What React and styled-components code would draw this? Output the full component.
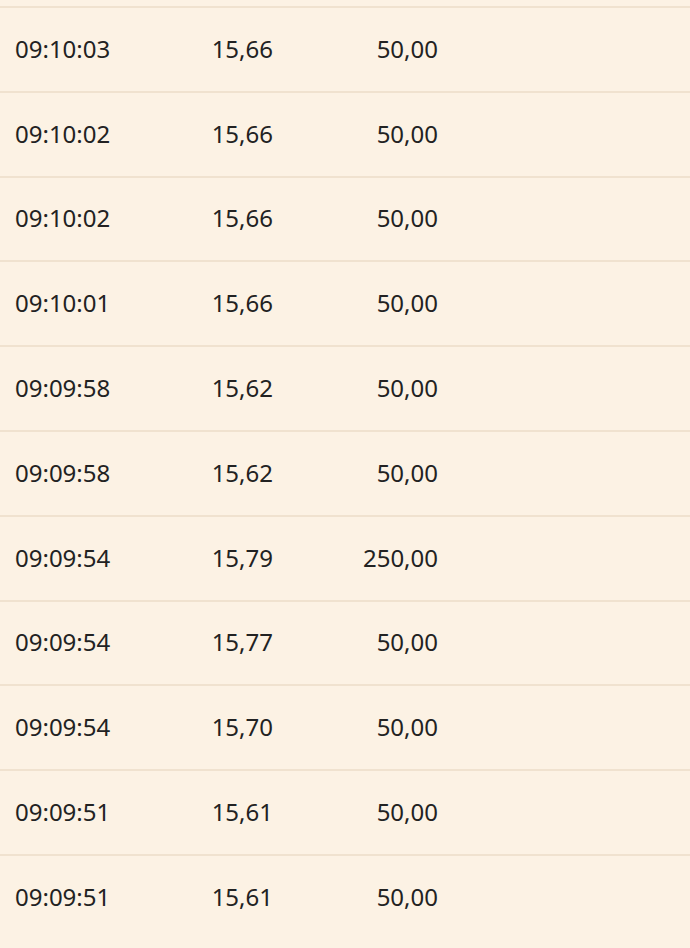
import { createGlobalStyle } from 'styled-components';
import styled from 'styled-components';

const GlobalStyle = createGlobalStyle`
  html, body {
    margin: 0;
    padding: 0;
    background: #fcf2e4;
  }
  body {
    font-family: 'Noto Sans', 'Open Sans', sans-serif;
    color: #222222;
  }
`;

const List = styled.div`
  padding-top: 6px;
`;

const Row = styled.div`
  display: grid;
  grid-template-columns: 140px 118px 165px;
  align-items: center;
  height: 82.8px;
  padding-left: 15px;
  border-top: 2px solid #f0e2cf;
  font-size: 24px;
  line-height: 1;
`;

const Cell = styled.span`
  text-align: ${props => (props.right ? 'right' : 'left')};
  white-space: nowrap;
  padding-bottom: 1px;
`;

const trades = [
  ['09:10:03', '15,66', '50,00'],
  ['09:10:02', '15,66', '50,00'],
  ['09:10:02', '15,66', '50,00'],
  ['09:10:01', '15,66', '50,00'],
  ['09:09:58', '15,62', '50,00'],
  ['09:09:58', '15,62', '50,00'],
  ['09:09:54', '15,79', '250,00'],
  ['09:09:54', '15,77', '50,00'],
  ['09:09:54', '15,70', '50,00'],
  ['09:09:51', '15,61', '50,00'],
  ['09:09:51', '15,61', '50,00'],
];

export default function App() {
  return (
    <>
      <GlobalStyle />
      <List>
        {trades.map(([time, price, volume], i) => (
          <Row key={i}>
            <Cell>{time}</Cell>
            <Cell right>{price}</Cell>
            <Cell right>{volume}</Cell>
          </Row>
        ))}
      </List>
    </>
  );
}
